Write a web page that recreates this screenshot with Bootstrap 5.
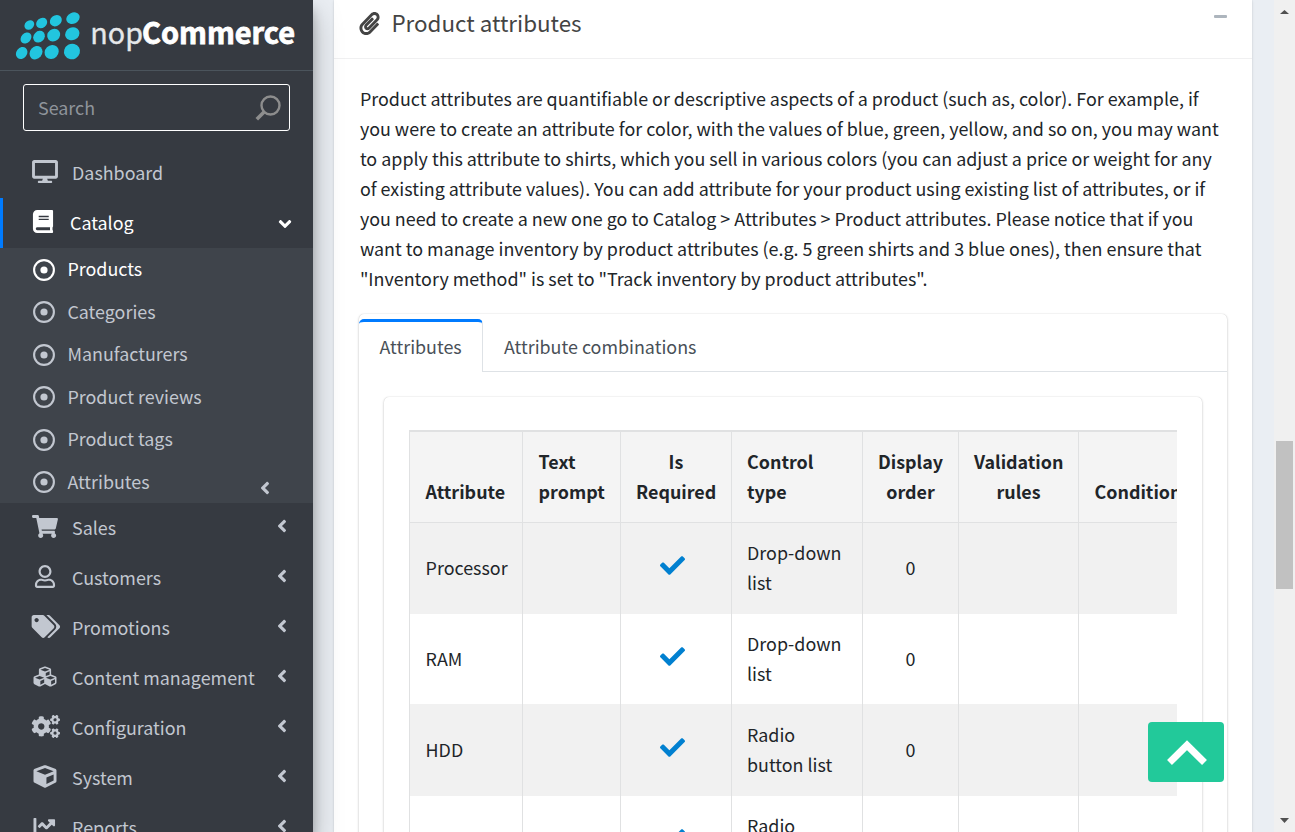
<!DOCTYPE html>
<html lang="en">
<head>
<meta charset="utf-8">
<title>nopCommerce administration</title>
<meta name="viewport" content="width=device-width, initial-scale=1">
<link href="https://cdn.jsdelivr.net/npm/bootstrap@5.3.0/dist/css/bootstrap.min.css" rel="stylesheet">
<style>
body{font-family:"Noto Sans CJK SC",sans-serif;font-size:17.9px;line-height:30px;color:#212529;background:#eaeef3}
.app{height:832px}
svg{display:block;fill:currentColor;flex:none}
svg.line-art{fill:none}
/* sidebar */
.side{width:313px;background:#363a41;color:#c2c7d0;z-index:5;box-shadow:0 14px 28px rgba(0,0,0,.25),0 10px 10px rgba(0,0,0,.22)}
.brand{height:71px;border-bottom:1px solid #4b545c}
.find{height:47px;margin:13px 23px 17px;border:1px solid #fff;border-radius:3px;padding:0 8px 0 14px;color:#8f949b}
.find span{padding-bottom:2px}
.side .item{height:50px;padding-left:32px;padding-bottom:2px;color:#c2c7d0;text-decoration:none}
.side .item .lbl{padding-bottom:1px}
.side .ico{width:26px;margin-right:14px;margin-bottom:1px}
.side .arrow{margin-left:auto;margin-right:26px;margin-bottom:3px}
.side .item.current{color:#fff;border-left:3px solid #007bff;padding-left:27px}
.side .item.current .arrow{margin:3px 22px 0 auto}
.side .sub{background:#3f444b;height:255px}
.side .sub .item{height:42.5px;padding-left:33px;padding-bottom:0}
.side .sub .item .ico{width:22px;margin:1px 12.4px 0 0}
.side .sub .item .lbl{padding-bottom:2px}
.side .sub .on{color:#fff}
.side .sub .arrow{margin-right:43px;margin-bottom:-12px}
/* content */
.panel{margin-left:21px;width:918px;background:#fff;box-shadow:0 0 1px rgba(0,0,0,.125),0 1px 3px rgba(0,0,0,.1)}
.panel-head{height:59px;border-bottom:1px solid #f0f0f1;padding:0 25px 11px;color:#444}
.ttl{font-size:22.4px;padding-left:3.4px;padding-bottom:4px}
.minus{width:13px;height:3px;background:#adb5bd;border-radius:1px;margin-top:-15px}
.intro{padding:24px 20px 0 25.9px;height:255px;white-space:nowrap}
.box{background:#fff;border-radius:5px;box-shadow:0 0 1px rgba(0,0,0,.2),0 1px 3px rgba(0,0,0,.2)}
.outer{margin:0 25px;height:600px}
.tabrow{height:58px;padding-top:5px}
.tabrow .tb{height:53px;padding:2px 21px 0;color:#495057;line-height:50px;border-bottom:1px solid #dee2e6}
.tabrow .tb.sel{border:0;border-top:3px solid #007bff;border-right:1px solid #dee2e6;border-radius:5px 5px 0 0;padding:0 0 0 20.5px;width:124px;line-height:49px}
.inner{margin:25px 25px 0 25px;height:500px;padding:33px 25px 0}
.clip{overflow:hidden;height:460px}
.grid{table-layout:fixed;width:800px;border-collapse:separate;border-spacing:0}
.grid th,.grid td{border-left:1px solid #e0e1e2;padding:0 15px 4px;vertical-align:middle}
.grid th:nth-child(-n+2),.grid td:nth-child(-n+2){padding-left:15.6px;padding-right:0}
.grid th{border-top:2px solid #e0e1e2;border-bottom:1px solid #e0e1e2;background:#f4f4f4;height:93px;vertical-align:bottom;padding-bottom:16px;font-weight:700}
.grid th:nth-child(2){padding-right:14px}
.grid th:last-child{padding-left:15.5px}
.grid tbody tr:nth-child(odd) td{background:#f1f1f1}
.grid tbody tr:nth-child(even) td{background:#fff}
.grid tbody tr{height:91px}
.grid tbody tr:nth-child(2){height:90px}
.grid tbody tr:nth-child(2) td{padding-bottom:2px}
.grid tbody tr:nth-child(3){height:92px}
.grid tbody tr:nth-child(3) td{padding-bottom:2px}
.grid svg{margin:0 0 3px 24px;color:#0180d0}
.c{text-align:center}
.bar{width:21px;background:#f0f0f0;color:#505050;padding:10px 2px 9px}
.thumb{height:148px;background:#c1c1c1;margin-top:427px}
.totop{position:absolute;left:1148px;top:722px;width:76px;height:60px;padding:1px 0 0 2px;border-radius:4px;background:#22c99a;color:#fff;z-index:6}
</style>
</head>
<body class="overflow-hidden">
<svg width="0" height="0" class="position-absolute">
<symbol id="left" viewBox="0 0 256 512"><path d="M31.7 239l136-136c9.4-9.4 24.6-9.4 33.9 0l22.6 22.6c9.4 9.4 9.4 24.6 0 33.9L127.9 256l96.4 96.4c9.4 9.4 9.4 24.6 0 33.9L201.7 409c-9.4 9.4-24.6 9.4-33.9 0l-136-136c-9.5-9.4-9.5-24.6-.1-34z"/></symbol>
<symbol id="dot" viewBox="0 0 22 22"><circle cx="11" cy="11" r="9.9" fill="none" stroke="currentColor" stroke-width="2.1"/><circle cx="11" cy="11" r="3.6"/></symbol>
<symbol id="check" viewBox="0 0 512 512"><path d="M173.898 439.404l-166.4-166.4c-9.997-9.997-9.997-26.206 0-36.204l36.203-36.204c9.997-9.998 26.207-9.998 36.204 0L192 312.69 432.095 72.596c9.997-9.997 26.207-9.997 36.204 0l36.203 36.204c9.997 9.997 9.997 26.206 0 36.204l-294.4 294.401c-9.998 9.997-26.207 9.997-36.204-.001z"/></symbol>
</svg>
<div class="app d-flex position-relative overflow-hidden">
<aside class="side d-flex flex-column flex-shrink-0">
  <div class="brand flex-shrink-0">
    <svg width="313" height="70" viewBox="0 0 939 210">
      <g fill="#22c5df">
        <ellipse cx="88" cy="75" rx="16" ry="13" transform="rotate(-42 88 75)"/><ellipse cx="125" cy="69" rx="18" ry="14.500" transform="rotate(-40 125 69)"/><ellipse cx="167.500" cy="62" rx="19" ry="16" transform="rotate(-38 167.500 62)"/><ellipse cx="219" cy="54.500" rx="21" ry="16.500" transform="rotate(-25 219 54.500)"/>
        <ellipse cx="78" cy="114" rx="18.500" ry="14.500" transform="rotate(-48 78 114)"/><ellipse cx="117" cy="110" rx="19" ry="16" transform="rotate(-45 117 110)"/><ellipse cx="161" cy="105.500" rx="20.500" ry="18" transform="rotate(-40 161 105.500)"/><ellipse cx="217" cy="101.500" rx="22" ry="19" transform="rotate(-25 217 101.500)"/>
        <ellipse cx="65" cy="159" rx="19.500" ry="16" transform="rotate(-52 65 159)"/><ellipse cx="108" cy="158" rx="21.500" ry="18" transform="rotate(-50 108 158)"/><ellipse cx="155" cy="156" rx="22.500" ry="20" transform="rotate(-45 155 156)"/><ellipse cx="216" cy="154.500" rx="24.500" ry="23" transform="rotate(-30 216 154.500)"/>
      </g>
      <g fill="#fff" font-size="88"><text x="271" y="131" textLength="158" lengthAdjust="spacingAndGlyphs" fill="#e6e8ea" stroke="#e6e8ea" stroke-width="1">nop</text><text x="426" y="131" font-weight="700" stroke="#fff" stroke-width="2.500" textLength="459" lengthAdjust="spacingAndGlyphs">Commerce</text></g>
    </svg>
  </div>
  <div class="find d-flex align-items-center justify-content-between flex-shrink-0"><span>Search</span>
    <svg class="line-art" width="26" height="26" viewBox="0 0 26 26" stroke="#8d8d8d"><circle cx="15.500" cy="10.500" r="9" stroke-width="2.4"/><path d="M9 17L1.800 24.300" stroke-width="3.600"/></svg></div>
  <nav class="d-flex flex-column">
    <a class="item d-flex align-items-center"><svg class="ico" height="23" viewBox="0 0 576 512"><path d="M528 0H48C21.500 0 0 21.500 0 48v320c0 26.500 21.500 48 48 48h192l-16 48h-72c-13.300 0-24 10.700-24 24s10.700 24 24 24h272c13.300 0 24-10.700 24-24s-10.700-24-24-24h-72l-16-48h192c26.500 0 48-21.500 48-48V48c0-26.500-21.500-48-48-48zm-16 352H64V64h448v288z"/></svg><span class="lbl">Dashboard</span></a>
    <a class="item current d-flex align-items-center"><svg class="ico" height="23" viewBox="0 0 448 512"><path d="M448 360V24c0-13.300-10.700-24-24-24H96C43 0 0 43 0 96v320c0 53 43 96 96 96h328c13.300 0 24-10.700 24-24v-16c0-7.500-3.500-14.300-8.900-18.700-4.200-15.400-4.200-59.300 0-74.700 5.400-4.300 8.900-11.100 8.900-18.600zM128 134c0-3.300 2.700-6 6-6h212c3.300 0 6 2.700 6 6v20c0 3.300-2.700 6-6 6H134c-3.300 0-6-2.700-6-6v-20zm0 64c0-3.300 2.700-6 6-6h212c3.300 0 6 2.700 6 6v20c0 3.300-2.700 6-6 6H134c-3.300 0-6-2.700-6-6v-20zm253.400 250H96c-17.700 0-32-14.300-32-32 0-17.600 14.400-32 32-32h285.400c-1.900 17.100-1.900 46.900 0 64z"/></svg><span class="lbl">Catalog</span>
      <svg class="arrow overflow-visible" width="12" height="20" viewBox="0 0 256 512"><use href="#left" width="256" height="512" transform="rotate(-90 128 256)"/></svg></a>
    <div class="sub">
      <a class="item on d-flex align-items-center"><svg class="ico" height="22"><use href="#dot"/></svg><span class="lbl">Products</span></a>
      <a class="item d-flex align-items-center"><svg class="ico" height="22"><use href="#dot"/></svg><span class="lbl">Categories</span></a>
      <a class="item d-flex align-items-center"><svg class="ico" height="22"><use href="#dot"/></svg><span class="lbl">Manufacturers</span></a>
      <a class="item d-flex align-items-center"><svg class="ico" height="22"><use href="#dot"/></svg><span class="lbl">Product reviews</span></a>
      <a class="item d-flex align-items-center"><svg class="ico" height="22"><use href="#dot"/></svg><span class="lbl">Product tags</span></a>
      <a class="item d-flex align-items-center"><svg class="ico" height="22"><use href="#dot"/></svg><span class="lbl">Attributes</span><svg class="arrow" width="10" height="20"><use href="#left"/></svg></a>
    </div>
    <a class="item d-flex align-items-center"><svg class="ico" height="23" viewBox="0 0 576 512"><path d="M528.120 301.319l47.273-208C578.806 78.301 567.391 64 551.990 64H159.208l-9.166-44.810C147.758 8.021 137.930 0 126.529 0H24C10.745 0 0 10.745 0 24v16c0 13.255 10.745 24 24 24h69.883l70.248 343.435C147.325 417.100 136 435.222 136 456c0 30.928 25.072 56 56 56s56-25.072 56-56c0-15.674-6.447-29.835-16.824-40h209.647C430.447 426.165 424 440.326 424 456c0 30.928 25.072 56 56 56s56-25.072 56-56c0-22.172-12.888-41.332-31.579-50.405l5.517-24.276c3.413-15.018-8.002-29.319-23.403-29.319H218.117l-6.545-32h293.145c11.206 0 20.920-7.754 23.403-18.681z"/></svg><span class="lbl">Sales</span><svg class="arrow" width="10" height="20"><use href="#left"/></svg></a>
    <a class="item d-flex align-items-center"><svg class="ico" height="23" viewBox="0 0 448 512"><path d="M313.600 304c-28.700 0-42.500 16-89.600 16-47.100 0-60.800-16-89.600-16C60.200 304 0 364.200 0 438.400V464c0 26.500 21.500 48 48 48h352c26.500 0 48-21.500 48-48v-25.600c0-74.200-60.200-134.400-134.400-134.400zM400 464H48v-25.600c0-47.600 38.800-86.400 86.400-86.400 14.600 0 38.300 16 89.600 16 51.700 0 74.900-16 89.600-16 47.600 0 86.400 38.800 86.400 86.400V464zM224 288c79.500 0 144-64.500 144-144S303.500 0 224 0 80 64.500 80 144s64.500 144 144 144zm0-240c52.900 0 96 43.100 96 96s-43.100 96-96 96-96-43.100-96-96 43.100-96 96-96z"/></svg><span class="lbl">Customers</span><svg class="arrow" width="10" height="20"><use href="#left"/></svg></a>
    <a class="item d-flex align-items-center"><svg class="ico overflow-visible" height="23" viewBox="8 0 585 512" preserveAspectRatio="none"><path d="M497.941 225.941L286.059 14.059A48 48 0 0 0 252.118 0H48C21.490 0 0 21.490 0 48v204.118a48 48 0 0 0 14.059 33.941l211.882 211.882c18.744 18.745 49.136 18.746 67.882 0l204.118-204.118c18.745-18.745 18.745-49.137 0-67.882zM112 160c-26.510 0-48-21.490-48-48s21.490-48 48-48 48 21.490 48 48-21.490 48-48 48zm513.941 133.823L421.823 497.941c-18.745 18.745-49.137 18.745-67.882 0l-.36-.36L527.640 323.522c16.999-16.999 26.360-39.600 26.360-63.640s-9.362-46.641-26.360-63.640L331.397 0h48.721a48 48 0 0 1 33.941 14.059l211.882 211.882c18.745 18.745 18.745 49.137 0 67.882z"/></svg><span class="lbl">Promotions</span><svg class="arrow" width="10" height="20"><use href="#left"/></svg></a>
    <a class="item d-flex align-items-center"><svg class="ico" height="23" viewBox="0 0 512 512"><path d="M488.600 250.200L392 214V105.500c0-15-9.300-28.400-23.400-33.700l-100-37.500c-8.100-3.100-17.100-3.100-25.300 0l-100 37.500c-14.100 5.300-23.400 18.700-23.400 33.700V214l-96.600 36.200C9.300 255.500 0 268.900 0 283.900V394c0 13.600 7.700 26.100 19.900 32.200l100 50c10.100 5.100 22.100 5.100 32.200 0l103.900-52 103.900 52c10.100 5.100 22.100 5.100 32.200 0l100-50c12.200-6.100 19.900-18.600 19.900-32.200V283.900c0-15-9.300-28.400-23.400-33.700zM358 214.800l-85 31.900v-68.200l85-37v73.300zM154 104.100l102-38.200 102 38.200v.6l-102 41.400-102-41.400v-.6zm84 291.100l-85 42.500v-79.100l85-38.800v75.400zm0-112l-102 41.400-102-41.400v-.6l102-38.200 102 38.200v.6zm240 112l-85 42.500v-79.100l85-38.800v75.400zm0-112l-102 41.400-102-41.400v-.6l102-38.200 102 38.200v.6z"/></svg><span class="lbl">Content management</span><svg class="arrow" width="10" height="20"><use href="#left"/></svg></a>
    <a class="item d-flex align-items-center"><svg class="ico overflow-visible" height="23" viewBox="5 0 590 512" preserveAspectRatio="none"><path id="smallcog" d="M512.100 191l-8.200 14.300c-3 5.300-9.400 7.500-15.100 5.400-11.800-4.400-22.600-10.700-32.100-18.600-4.600-3.800-5.800-10.500-2.800-15.700l8.200-14.300c-6.900-8-12.300-17.300-15.900-27.400h-16.500c-6 0-11.200-4.300-12.200-10.300-2-12-2.100-24.600 0-37.100 1-6 6.200-10.400 12.200-10.400h16.500c3.600-10.100 9-19.400 15.900-27.400l-8.200-14.300c-3-5.200-1.900-11.900 2.800-15.700 9.500-7.900 20.400-14.200 32.100-18.600 5.700-2.100 12.100.1 15.100 5.400l8.200 14.300c10.500-1.900 21.200-1.900 31.700 0L552 6.300c3-5.300 9.400-7.500 15.100-5.400 11.800 4.400 22.600 10.700 32.100 18.600 4.600 3.800 5.800 10.500 2.800 15.700l-8.200 14.300c6.900 8 12.300 17.300 15.900 27.400h16.500c6 0 11.200 4.300 12.200 10.300 2 12 2.100 24.600 0 37.100-1 6-6.200 10.400-12.200 10.400h-16.500c-3.600 10.100-9 19.400-15.900 27.400l8.200 14.300c3 5.200 1.900 11.900-2.800 15.700-9.500 7.900-20.400 14.200-32.100 18.600-5.700 2.100-12.100-.1-15.100-5.400l-8.200-14.300c-10.400 1.900-21.200 1.900-31.700 0zm-10.500-58.800c38.500 29.600 82.400-14.300 52.800-52.800-38.500-29.700-82.400 14.300-52.800 52.800z"/><use href="#smallcog" y="298.900"/><path d="M386.300 286.100l33.700 16.800c10.100 5.800 14.500 18.100 10.500 29.100-8.900 24.200-26.400 46.400-42.600 65.800-7.400 8.900-20.200 11.100-30.300 5.300l-29.100-16.800c-16 13.700-34.600 24.600-54.900 31.700v33.600c0 11.600-8.300 21.600-19.700 23.600-24.600 4.200-50.400 4.400-75.900 0-11.500-2-20-11.900-20-23.600V418c-20.300-7.200-38.900-18-54.900-31.700L74 403c-10 5.800-22.900 3.600-30.300-5.300-16.200-19.400-33.300-41.600-42.200-65.700-4-10.900.4-23.200 10.500-29.100l33.300-16.800c-3.900-20.900-3.900-42.400 0-63.400L12 205.800c-10.100-5.800-14.600-18.100-10.500-29 8.900-24.200 26-46.400 42.200-65.800 7.400-8.900 20.200-11.100 30.300-5.300l29.100 16.800c16-13.700 34.600-24.600 54.900-31.700V57.100c0-11.500 8.200-21.500 19.600-23.500 24.600-4.200 50.500-4.400 76-.1 11.500 2 20 11.900 20 23.600v33.600c20.300 7.200 38.900 18 54.900 31.700l29.100-16.800c10-5.800 22.900-3.600 30.300 5.300 16.200 19.400 33.200 41.600 42.100 65.800 4 10.900.1 23.200-10 29.100l-33.700 16.800c3.900 21 3.900 42.500 0 63.500zm-117.600 21.100c59.200-77-28.700-164.900-105.700-105.700-59.200 77 28.700 164.900 105.700 105.700z"/></svg><span class="lbl">Configuration</span><svg class="arrow" width="10" height="20"><use href="#left"/></svg></a>
    <a class="item d-flex align-items-center"><svg class="ico" height="23" viewBox="0 0 512 512"><path d="M239.100 6.300l-208 78c-18.700 7-31.100 25-31.100 45v225.100c0 18.200 10.300 34.800 26.500 42.900l208 104c13.500 6.800 29.400 6.800 42.900 0l208-104c16.300-8.100 26.500-24.800 26.500-42.900V129.300c0-20-12.400-37.900-31.100-44.900l-208-78C262 2.200 250 2.200 239.100 6.300zM256 68.400l192 72v1.100l-192 78-192-78v-1.100l192-72zm32 356V275.500l160-65v133.900l-160 80z"/></svg><span class="lbl">System</span><svg class="arrow" width="10" height="20"><use href="#left"/></svg></a>
    <a class="item d-flex align-items-center"><svg class="ico" height="23" viewBox="0 0 512 512"><path d="M496 384H64V80c0-8.840-7.160-16-16-16H16C7.160 64 0 71.160 0 80v336c0 17.670 14.330 32 32 32h464c8.840 0 16-7.160 16-16v-32c0-8.840-7.160-16-16-16zM464 96H345.940c-21.380 0-32.090 25.850-16.970 40.970l32.400 32.400L288 242.750l-73.370-73.370c-12.500-12.500-32.760-12.500-45.250 0l-68.690 68.690c-6.250 6.250-6.250 16.380 0 22.630l22.620 22.620c6.250 6.250 16.380 6.250 22.630 0L192 237.250l73.370 73.370c12.500 12.500 32.760 12.500 45.250 0l96-96 32.400 32.400c15.120 15.120 40.970 4.410 40.970-16.970V112c.01-8.840-7.150-16-15.990-16z"/></svg><span class="lbl">Reports</span><svg class="arrow" width="10" height="20"><use href="#left"/></svg></a>
  </nav>
</aside>
<main class="panel flex-shrink-0">
  <div class="panel-head d-flex align-items-center">
    <svg width="21" height="23" viewBox="0 0 448 512"><path d="M43.246 466.142c-58.430-60.289-57.341-157.511 1.386-217.581L254.392 34c44.316-45.332 116.351-45.336 160.671 0 43.890 44.894 43.943 117.329 0 162.276L232.214 383.128c-29.855 30.537-78.633 30.111-107.982-.998-28.275-29.970-27.368-77.473 1.452-106.953l143.743-146.835c6.182-6.314 16.312-6.422 22.626-.241l22.861 22.379c6.315 6.182 6.422 16.312.241 22.626L171.427 319.927c-4.932 5.045-5.236 13.428-.648 18.292 4.372 4.634 11.245 4.711 15.688.165l182.849-186.851c19.613-20.062 19.613-52.725-.011-72.798-19.189-19.627-49.957-19.637-69.154 0L90.390 293.295c-34.763 35.560-35.299 93.120-1.191 128.313 34.010 35.093 88.985 35.137 123.058.286l172.060-175.999c6.177-6.319 16.307-6.433 22.626-.256l22.877 22.364c6.319 6.177 6.434 16.307.256 22.626l-172.060 175.998c-59.576 60.938-155.943 60.216-214.770-.485z"/></svg>
    <span class="ttl ms-2">Product attributes</span><span class="minus ms-auto"></span>
  </div>
  <div class="intro">Product attributes are quantifiable or descriptive aspects of a product (such as, color). For example, if<br>you were to create an attribute for color, with the values of blue, green, yellow, and so on, you may want<br>to apply this attribute to shirts, which you sell in various colors (you can adjust a price or weight for any<br>of existing attribute values). You can add attribute for your product using existing list of attributes, or if<br>you need to create a new one go to Catalog &gt; Attributes &gt; Product attributes. Please notice that if you<br>want to manage inventory by product attributes (e.g. 5 green shirts and 3 blue ones), then ensure that<br>"Inventory method" is set to "Track inventory by product attributes".</div>
  <section class="box outer">
    <div class="tabrow d-flex"><div class="tb sel">Attributes</div><div class="tb flex-grow-1">Attribute combinations</div></div>
    <div class="box inner"><div class="clip">
      <table class="grid">
        <colgroup><col style="width:113px"><col style="width:98px"><col style="width:111px"><col style="width:131px"><col style="width:96px"><col style="width:120px"><col></colgroup>
        <thead><tr><th>Attribute</th><th>Text prompt</th><th class="c">Is Required</th><th>Control type</th><th class="c">Display order</th><th class="c">Validation rules</th><th>Condition</th></tr></thead>
        <tbody>
        <tr><td>Processor</td><td></td><td><svg width="25" height="25"><use href="#check"/></svg></td><td>Drop-down list</td><td class="c">0</td><td></td><td></td></tr>
        <tr><td>RAM</td><td></td><td><svg width="25" height="25"><use href="#check"/></svg></td><td>Drop-down list</td><td class="c">0</td><td></td><td></td></tr>
        <tr><td>HDD</td><td></td><td><svg width="25" height="25"><use href="#check"/></svg></td><td>Radio button list</td><td class="c">0</td><td></td><td></td></tr>
        <tr><td></td><td></td><td><svg width="25" height="25"><use href="#check"/></svg></td><td>Radio<br>&nbsp;</td><td></td><td></td><td></td></tr>
        </tbody>
      </table>
    </div></div>
  </section>
</main>
<div class="bar ms-auto d-flex flex-column">
  <svg width="17" height="4" viewBox="0 0 17 4"><path d="M4 4L8.500 0 13 4z"/></svg>
  <div class="thumb"></div>
  <svg class="mt-auto" width="17" height="5" viewBox="0 0 17 5"><path d="M4 0L8.500 5 13 0z"/></svg>
</div>
<a class="totop d-flex align-items-center justify-content-center"><svg class="line-art" width="42" height="26" viewBox="0 0 42 26" stroke="#fff" stroke-width="7"><path d="M3.500 22.500L21 5.200l17.500 17.300"/></svg></a>
</div>
<script src="https://cdn.jsdelivr.net/npm/bootstrap@5.3.0/dist/js/bootstrap.bundle.min.js"></script>
</body>
</html>
